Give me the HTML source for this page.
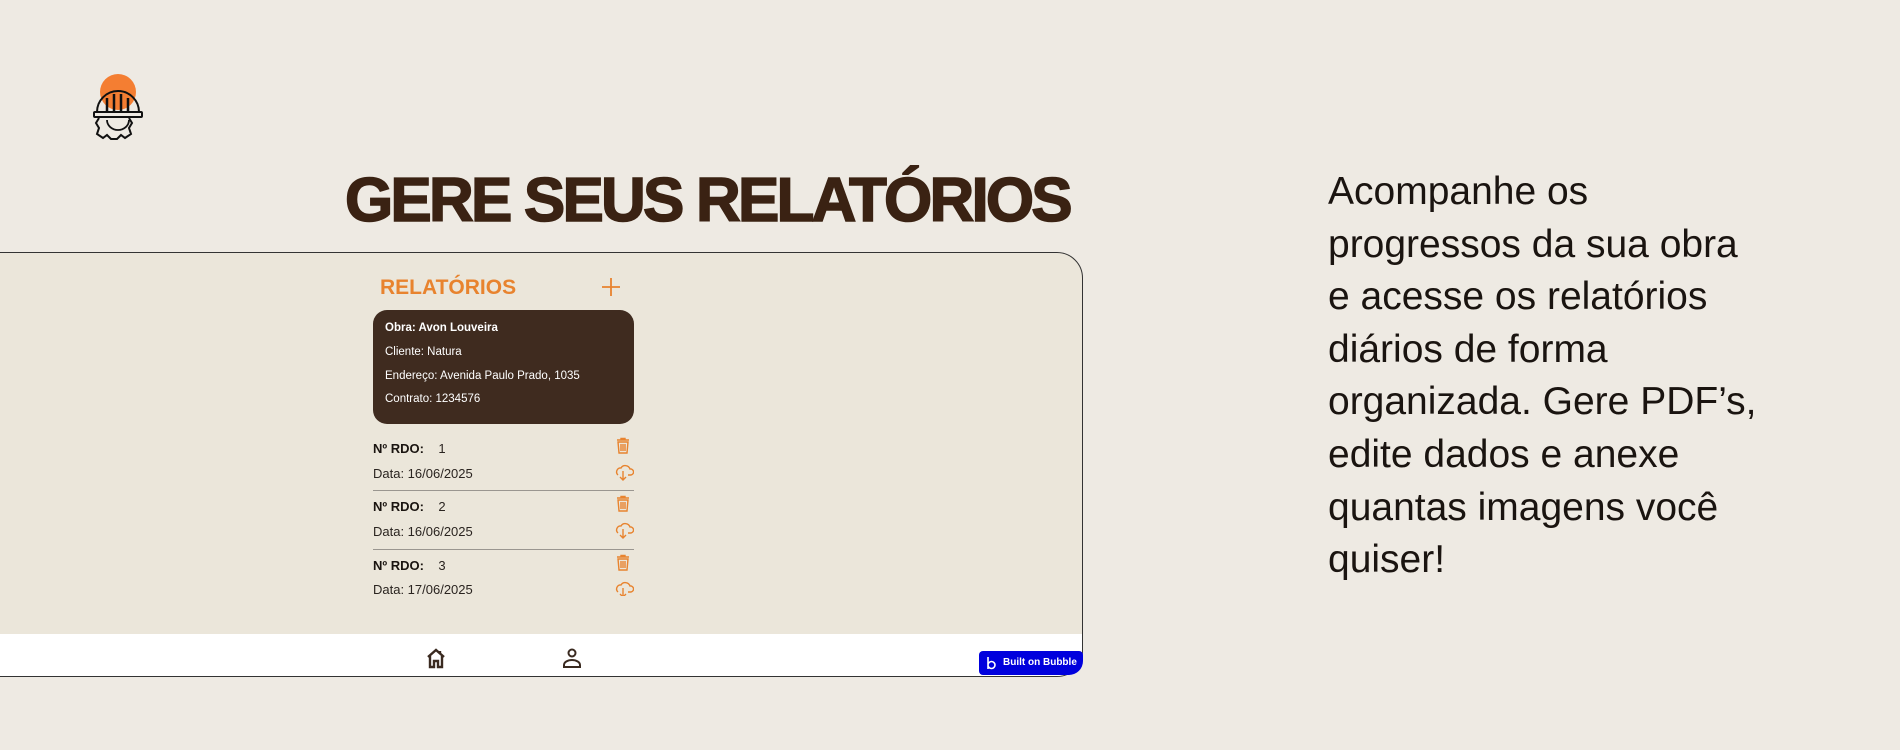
<!DOCTYPE html>
<html><head><meta charset="utf-8"><style>
*{margin:0;padding:0;box-sizing:border-box}
body{width:1900px;height:750px;overflow:hidden;background:#eeeae3;font-family:"Liberation Sans",sans-serif;position:relative}
.abs{position:absolute}
h1{position:absolute;left:345px;top:161px;font-size:62px;font-weight:900;color:#3a2213;letter-spacing:-2.8px;white-space:nowrap;line-height:80px;-webkit-text-stroke:1.5px #3a2213}
.card{position:absolute;left:-2px;top:252px;width:1085px;height:425px;background:#ebe6da;border:1px solid #333;border-radius:0 26px 26px 0;overflow:hidden}
.bar{position:absolute;left:0;top:381px;width:100%;height:44px;background:#fff}
.dark{position:absolute;left:373px;top:310px;width:261px;height:114px;background:#3f2b1f;border-radius:14px;color:#fff;font-size:11.5px}
.dark div{position:absolute;left:12px}
.row{position:absolute;left:373px;width:261px;font-size:13px;color:#2a2420}
.row b{font-weight:bold;color:#1a1410}
.line{position:absolute;left:373px;width:261px;height:1px;background:#9a9690}
.right{position:absolute;left:1328px;top:166px;font-size:39px;line-height:52.6px;color:#1a1410;letter-spacing:0}
</style></head><body>
<svg class="abs" style="left:85px;top:72px" width="65" height="70" viewBox="0 0 65 70">
<circle cx="33" cy="20" r="18" fill="#f47e32"/>
<path d="M12 40 A21 21 0 0 1 54 40" fill="none" stroke="#111" stroke-width="2"/>
<rect x="9" y="40" width="48" height="5" rx="1" fill="none" stroke="#111" stroke-width="2"/>
<path d="M22 40V26M29 40V22M36 40V22M43 40V26" stroke="#111" stroke-width="2.5" fill="none"/>
<path d="M14 46 l-3 5 3 5 -2 6 6 4 4-3 4 4 h6 l4-4 4 3 6-4 -2-6 3-5 -3-5" fill="none" stroke="#111" stroke-width="2"/>
<path d="M22 48 a11 10 0 0 0 22 0" fill="none" stroke="#111" stroke-width="1.8"/>
</svg>
<h1>GERE SEUS RELATÓRIOS</h1>
<div class="card"><div class="bar"></div></div>
<div class="abs" style="left:380px;top:276px;font-size:21px;font-weight:bold;color:#e8832e">RELATÓRIOS</div>
<svg class="abs" style="left:601px;top:277px" width="20" height="20"><path d="M10 1v18M1 10h18" stroke="#e8832e" stroke-width="1.8"/></svg>
<div class="dark">
<div style="top:12px;font-weight:bold">Obra: Avon Louveira</div>
<div style="top:36px">Cliente: Natura</div>
<div style="top:60px">Endereço: Avenida Paulo Prado, 1035</div>
<div style="top:83px">Contrato: 1234576</div>
</div>
<div class="row" style="top:441px"><b>Nº RDO:</b>&nbsp;&nbsp;&nbsp; 1</div>
<div class="row" style="top:466px">Data: 16/06/2025</div>
<div class="line" style="top:490px"></div>
<div class="row" style="top:499px"><b>Nº RDO:</b>&nbsp;&nbsp;&nbsp; 2</div>
<div class="row" style="top:524px">Data: 16/06/2025</div>
<div class="line" style="top:549px"></div>
<div class="row" style="top:558px"><b>Nº RDO:</b>&nbsp;&nbsp;&nbsp; 3</div>
<div class="row" style="top:582px">Data: 17/06/2025</div>
<svg class="abs" style="left:612px;top:436px" width="22" height="160">
<g id="t" fill="none" stroke="#e8832e" stroke-width="1.4">
<path d="M5 4h12M9 4V2.5h4V4M6 6h10l-1 11H7z"/><path d="M9 8v7M11 8v7M13 8v7"/>
<path d="M6 39a4 4 0 0 1 3-7 5 5 0 0 1 9 1 3 3 0 0 1 1 6h-3M11 35v9M8 41l3 3 3-3"/>
</g>
<use href="#t" y="58"/><use href="#t" y="117"/>
</svg>
<svg class="abs" style="left:425px;top:647px" width="22" height="22" viewBox="0 0 22 22"><path d="M3 10L11 3l8 7M5 9v11h4v-6h4v6h4V9M15 4v3" fill="none" stroke="#3a2a20" stroke-width="2.4"/></svg>
<svg class="abs" style="left:561px;top:647px" width="22" height="22" viewBox="0 0 22 22"><circle cx="11" cy="6" r="3.5" fill="none" stroke="#3a2a20" stroke-width="2"/><path d="M3 20v-2c0-3 4-5 8-5s8 2 8 5v2z" fill="none" stroke="#3a2a20" stroke-width="2"/></svg>
<div class="abs" style="left:979px;top:651px;width:104px;height:24px;background:#0000dd;border-radius:4px 4px 14px 4px;color:#fff;font-size:10px;font-weight:bold;line-height:24px;padding-left:24px">Built on Bubble
<svg class="abs" style="left:6px;top:5px" width="12" height="15"><path d="M3 1v12M3 9a3.5 3.5 0 1 0 7 0a3.5 3.5 0 1 0-7 0" stroke="#fff" stroke-width="1.6" fill="none"/></svg></div>
<div class="right">Acompanhe os<br>progressos da sua obra<br>e acesse os relatórios<br>diários de forma<br>organizada. Gere PDF’s,<br>edite dados e anexe<br>quantas imagens você<br>quiser!</div>
</body></html>
